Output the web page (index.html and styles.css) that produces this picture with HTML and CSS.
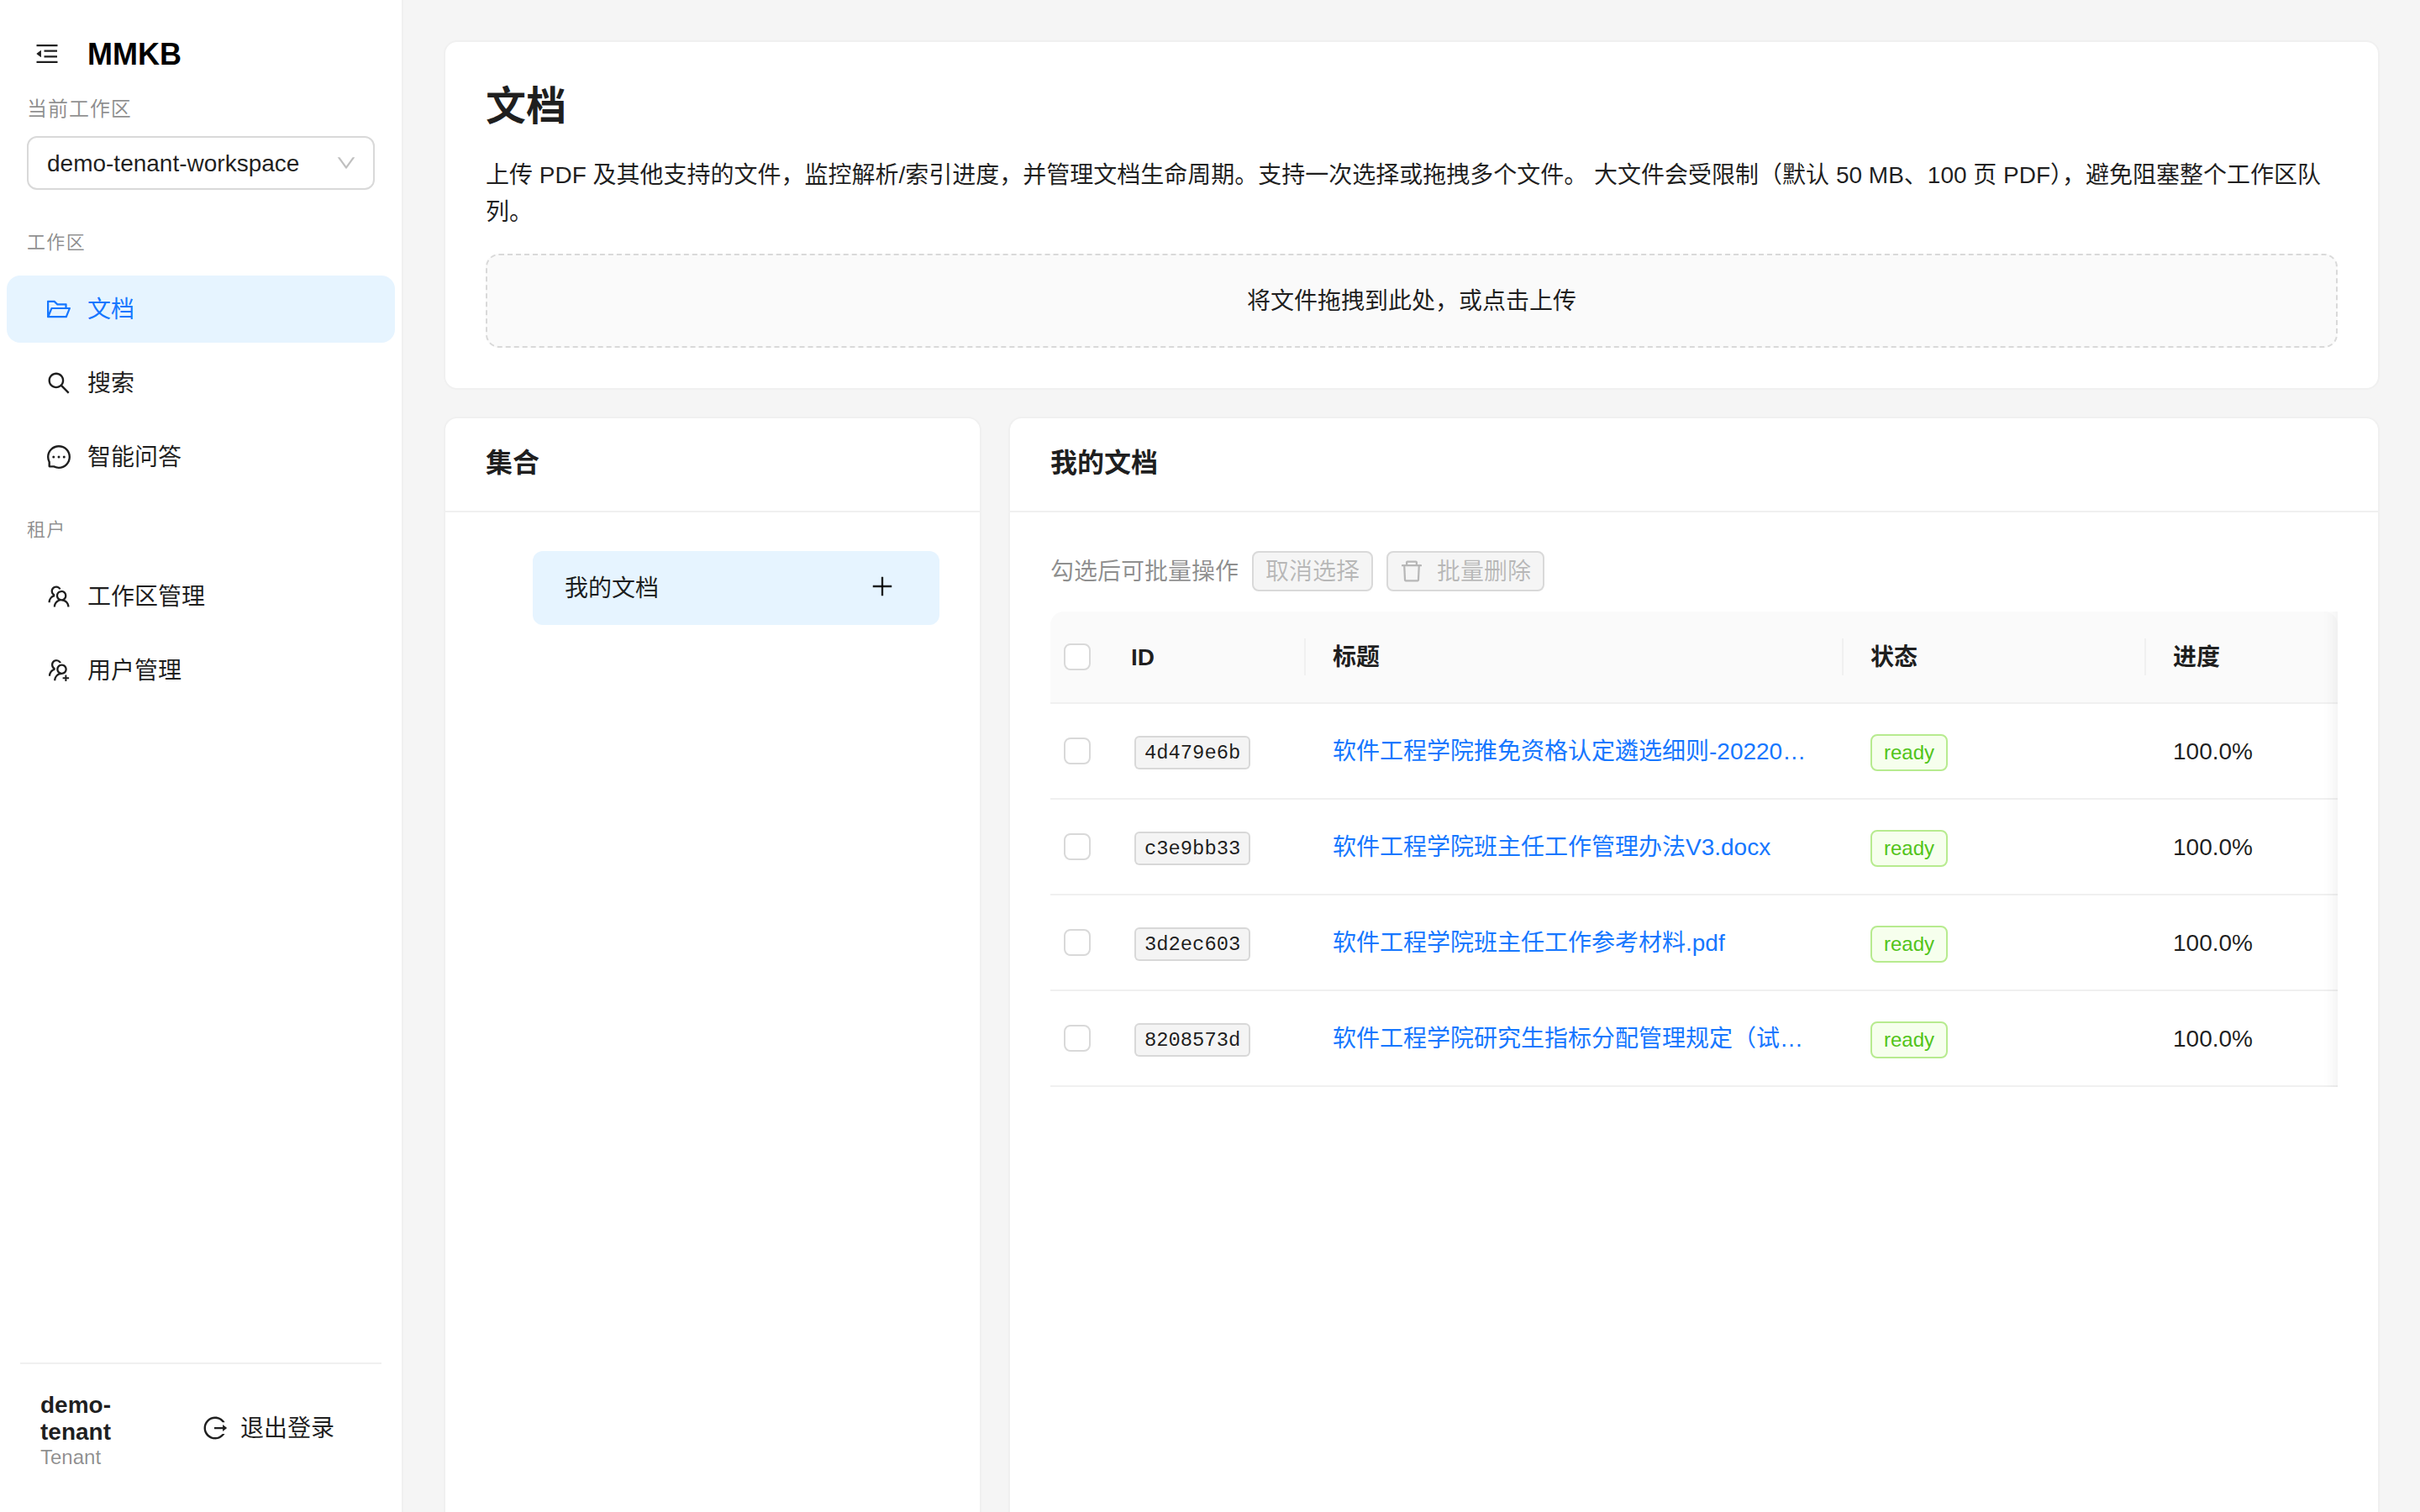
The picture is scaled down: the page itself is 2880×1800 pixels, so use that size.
FILE: index.html
```html
<!DOCTYPE html>
<html lang="zh-CN">
<head>
    <meta charset="UTF-8">
    <meta name="viewport" content="width=device-width, initial-scale=1.0">
    <title>MMKB</title>
    <link rel="stylesheet" href="styles.css">
</head>
<body>
    <div class="layout">
        <aside class="sidebar">
            <div class="brand">
                <svg class="icon" viewBox="64 64 896 896"><path d="M408 442h480c4.400 0 8-3.600 8-8v-56c0-4.400-3.600-8-8-8H408c-4.400 0-8 3.600-8 8v56c0 4.400 3.600 8 8 8zm-8 204c0 4.400 3.600 8 8 8h480c4.400 0 8-3.600 8-8v-56c0-4.400-3.600-8-8-8H408c-4.400 0-8 3.600-8 8v56zm504-486H120c-4.400 0-8 3.600-8 8v56c0 4.400 3.600 8 8 8h784c4.400 0 8-3.600 8-8v-56c0-4.400-3.600-8-8-8zm0 632H120c-4.400 0-8 3.600-8 8v56c0 4.400 3.600 8 8 8h784c4.400 0 8-3.600 8-8v-56c0-4.400-3.600-8-8-8zM115.400 518.900L271.700 642c5.800 4.600 14.400.5 14.400-6.900V388.900c0-7.400-8.500-11.500-14.400-6.900L115.400 505.100a8.740 8.740 0 000 13.800z"/></svg>
                <span class="brand-name">MMKB</span>
            </div>
            <div class="workspace">
                <div class="workspace-label">当前工作区</div>
                <div class="select">
                    <span class="label">demo-tenant-workspace</span>
                    <svg class="select-arrow" viewBox="64 64 896 896"><path d="M884 256h-75c-5.100 0-9.900 2.500-12.900 6.600L512 654.200 227.900 262.600c-3-4.100-7.800-6.600-12.900-6.600h-75c-6.500 0-10.300 7.400-6.500 12.700l352.600 486.100c12.800 17.600 39 17.600 51.700 0l352.600-486.100c3.900-5.300.1-12.700-6.400-12.700z"/></svg>
                </div>
            </div>
            <nav class="menu">
                <div class="menu-title">工作区</div>
                <a class="menu-item active">
                    <svg class="icon" viewBox="64 64 896 896"><path d="M928 444H820V330.400c0-17.700-14.300-32-32-32H473L355.700 186.200a8.150 8.150 0 00-5.500-2.200H96c-17.700 0-32 14.300-32 32v592c0 17.700 14.300 32 32 32h698c13 0 24.800-7.900 29.700-20l134-332c1.500-3.800 2.300-7.900 2.300-12 0-17.700-14.300-32-32-32zM136 256h188.500l119.600 114.400H748V444H238c-13 0-24.800 7.900-29.700 20L136 643.200V256zm635.300 512H159l103.300-256h612.400L771.300 768z"/></svg>
                    <span class="label">文档</span>
                </a>
                <a class="menu-item">
                    <svg class="icon" viewBox="64 64 896 896"><path d="M909.600 854.500L649.900 594.800C690.200 542.700 712 479 712 412c0-80.200-31.300-155.400-87.900-212.100-56.600-56.700-132-87.900-212.100-87.900s-155.500 31.300-212.100 87.900C143.200 256.500 112 331.800 112 412c0 80.100 31.300 155.500 87.900 212.100C256.500 680.800 331.800 712 412 712c67 0 130.600-21.800 182.700-62l259.700 259.600a8.200 8.200 0 0011.600 0l43.600-43.500a8.200 8.200 0 000-11.600zM570.400 570.400C528 612.700 471.800 636 412 636s-116-23.300-158.400-65.600C211.300 528 188 471.800 188 412s23.300-116.100 65.600-158.400C296 211.300 352.200 188 412 188s116.100 23.200 158.400 65.600S636 352.200 636 412s-23.300 116.100-65.600 158.400z"/></svg>
                    <span class="label">搜索</span>
                </a>
                <a class="menu-item">
                    <svg class="icon" viewBox="64 64 896 896"><path d="M464 512a48 48 0 1096 0 48 48 0 10-96 0zm200 0a48 48 0 1096 0 48 48 0 10-96 0zm-400 0a48 48 0 1096 0 48 48 0 10-96 0zm661.200-173.600c-22.600-53.700-55-101.900-96.300-143.300a444.350 444.350 0 00-143.300-96.300C630.600 75.700 572.200 64 512 64h-2c-60.600.3-119.300 12.300-174.500 35.900a445.350 445.350 0 00-142 96.500c-40.900 41.300-73 89.300-95.200 142.800-23 55.400-34.600 114.300-34.300 174.900A449.400 449.400 0 00112 714v152a46 46 0 0046 46h152.100A449.400 449.400 0 00510 960h2.100c59.900 0 118-11.600 172.700-34.300a444.480 444.480 0 00142.800-95.200c41.300-40.900 73.800-88.700 96.500-142 23.600-55.200 35.600-113.900 35.900-174.500.3-60.900-11.500-120-34.800-175.600zm-151.100 438C704 845.800 611 884 512 884h-1.700c-60.300-.3-120.200-15.300-173.100-43.500l-8.400-4.500H188V695.200l-4.500-8.400C155.300 633.900 140.300 574 140 513.700c-.4-99.700 37.700-193.300 107.600-263.800 69.800-70.500 163.100-109.500 262.800-109.900h1.700c50 0 98.500 9.700 144.200 28.900 44.600 18.700 84.600 45.600 119 80 34.300 34.300 61.300 74.400 80 119 19.400 46.200 29.100 95.200 28.900 145.800-.6 99.600-39.700 192.900-110.100 262.700z"/></svg>
                    <span class="label">智能问答</span>
                </a>
                <div class="menu-title">租户</div>
                <a class="menu-item">
                    <svg class="icon" viewBox="64 64 896 896"><path d="M824.200 699.900a301.550 301.550 0 00-86.400-60.400C783.100 602.800 812 546.800 812 484c0-110.800-92.400-201.700-203.200-200-109.100 1.700-197 90.600-197 200 0 62.800 29 118.800 74.200 155.500a300.950 300.950 0 00-86.400 60.400C345 754.600 314 826.800 312 903.800a8 8 0 008 8.200h56c4.300 0 7.900-3.400 8-7.700 1.900-58 25.400-112.300 66.700-153.500A226.620 226.620 0 01612 684c60.900 0 118.200 23.700 161.300 66.800C814.600 792 838 846.300 840 904.300c.1 4.300 3.700 7.700 8 7.700h56a8 8 0 008-8.200c-2-77-33-149.200-87.800-203.900zM612 612c-34.200 0-66.400-13.300-90.500-37.500a126.860 126.860 0 01-37.500-91.800c.3-32.800 13.400-64.500 36.300-88 24-24.600 56.100-38.300 90.400-38.700 33.900-.3 66.800 12.900 91 36.600 24.800 24.300 38.400 56.800 38.400 91.400 0 34.200-13.300 66.300-37.500 90.500A127.300 127.300 0 01612 612zM361.500 510.400c-.9-8.700-1.400-17.500-1.400-26.400 0-15.900 1.500-31.400 4.300-46.500.7-3.600-1.200-7.300-4.500-8.800-13.600-6.100-26.100-14.500-36.900-25.100a127.540 127.540 0 01-38.700-95.400c.9-32.100 13.800-62.600 36.300-85.600 24.700-25.300 57.900-39.100 93.200-38.700 31.900.3 62.700 12.600 86 34.400 7.900 7.400 14.700 15.600 20.400 24.400 2 3.100 5.900 4.400 9.300 3.200 17.600-6.100 36.200-10.400 55.300-12.400 5.600-.6 8.800-6.600 6.300-11.600-32.500-64.300-98.900-108.700-175.700-109.900-110.900-1.700-203.300 89.200-203.300 199.900 0 62.800 28.900 118.800 74.200 155.500-31.800 14.700-61.100 35-86.500 60.400-54.800 54.700-85.800 126.900-87.800 204a8 8 0 008 8.200h56.100c4.300 0 7.900-3.400 8-7.700 1.900-58 25.400-112.300 66.700-153.500 29.400-29.400 65.400-49.800 104.700-59.700 3.900-1 6.500-4.700 6-8.700z"/></svg>
                    <span class="label">工作区管理</span>
                </a>
                <a class="menu-item">
                    <svg class="icon" viewBox="64 64 896 896"><path d="M892 772h-80v-80c0-4.400-3.600-8-8-8h-48c-4.400 0-8 3.600-8 8v80h-80c-4.400 0-8 3.600-8 8v48c0 4.400 3.600 8 8 8h80v80c0 4.400 3.600 8 8 8h48c4.400 0 8-3.600 8-8v-80h80c4.400 0 8-3.600 8-8v-48c0-4.400-3.600-8-8-8zM373.500 498.400c-.9-8.700-1.400-17.500-1.400-26.400 0-15.900 1.500-31.400 4.300-46.500.7-3.600-1.200-7.300-4.500-8.800-13.600-6.100-26.100-14.500-36.900-25.100a127.540 127.540 0 01-38.700-95.400c.9-32.100 13.800-62.600 36.300-85.600 24.700-25.300 57.900-39.100 93.200-38.700 31.900.3 62.700 12.600 86 34.400 7.900 7.400 14.700 15.600 20.400 24.400 2 3.100 5.900 4.400 9.300 3.200 17.600-6.100 36.200-10.400 55.300-12.400 5.600-.6 8.800-6.600 6.300-11.600-32.500-64.300-98.900-108.700-175.700-109.900-110.800-1.700-203.200 89.200-203.200 200 0 62.800 28.900 118.800 74.200 155.500-31.800 14.700-61.100 35-86.500 60.400-54.800 54.700-85.800 126.900-87.800 204a8 8 0 008 8.200h56.100c4.300 0 7.900-3.400 8-7.700 1.900-58 25.400-112.300 66.700-153.500 29.400-29.400 65.400-49.800 104.700-59.700 3.800-1.100 6.400-4.800 5.900-8.800zM824 472c0-109.400-87.900-198.300-196.900-200C516.300 270.300 424 361.200 424 472c0 62.800 29 118.800 74.200 155.500a300.950 300.950 0 00-86.400 60.400C357 742.600 326 814.800 324 891.800a8 8 0 008 8.200h56c4.300 0 7.900-3.400 8-7.700 1.900-58 25.400-112.300 66.700-153.500C505.800 695.700 563 672 624 672c110.400 0 200-89.500 200-200zm-109.500 90.500C690.300 586.700 658.200 600 624 600s-66.300-13.300-90.500-37.500a127.260 127.260 0 01-37.500-91.800c.3-32.800 13.400-64.500 36.300-88 24-24.600 56.100-38.300 90.400-38.700 33.900-.3 66.800 12.900 91 36.600 24.800 24.300 38.400 56.800 38.400 91.400-.1 34.200-13.400 66.300-37.600 90.500z"/></svg>
                    <span class="label">用户管理</span>
                </a>
            </nav>
            <div class="account">
                <div class="account-info">
                    <div class="account-name">demo-tenant</div>
                    <div class="account-role">Tenant</div>
                </div>
                <a class="logout">
                    <svg class="icon" viewBox="64 64 896 896"><path d="M868 732h-70.300c-4.800 0-9.300 2.100-12.300 5.800-7 8.500-14.500 16.700-22.400 24.500a353.840 353.840 0 01-112.700 75.900A352.800 352.800 0 01512.400 866c-47.900 0-94.300-9.400-137.900-27.800a353.840 353.840 0 01-112.700-75.900 353.280 353.280 0 01-76-112.500C167.300 606.200 158 559.900 158 512s9.400-94.200 27.800-137.800c17.800-42.100 43.400-80 76-112.500s70.500-58.100 112.700-75.900c43.600-18.400 90-27.800 137.900-27.800 47.900 0 94.300 9.300 137.900 27.800 42.200 17.800 80.100 43.400 112.700 75.900 7.900 7.900 15.300 16.100 22.400 24.500 3 3.700 7.600 5.800 12.300 5.800H868c6.300 0 10.200-7 6.700-12.300C798 160.500 663.800 81.600 511.300 82 271.700 82.600 79.600 277.100 82 516.400 84.400 751.900 276.200 942 512.400 942c152.100 0 285.700-78.800 362.300-197.700 3.400-5.300-.4-12.300-6.700-12.300zm88.900-226.300L815 393.700c-5.300-4.200-13-.4-13 6.300v76H488c-4.400 0-8 3.600-8 8v56c0 4.400 3.600 8 8 8h314v76c0 6.700 7.800 10.500 13 6.300l141.900-112a8 8 0 000-12.600z"/></svg>
                    <span class="label">退出登录</span>
                </a>
            </div>
        </aside>

        <main class="content">
            <section class="card intro">
                <h1>文档</h1>
                <p>上传 PDF 及其他支持的文件，监控解析/索引进度，并管理文档生命周期。支持一次选择或拖拽多个文件。 大文件会受限制（默认 50 MB、100 页 PDF），避免阻塞整个工作区队列。</p>
                <div class="dropzone">将文件拖拽到此处，或点击上传</div>
            </section>

            <div class="panels">
                <section class="card">
                    <header class="card-head">集合</header>
                    <div class="card-body">
                        <div class="collection">
                            <span class="label">我的文档</span>
                            <svg class="icon" viewBox="64 64 896 896"><path d="M482 152h60q8 0 8 8v704q0 8-8 8h-60q-8 0-8-8V160q0-8 8-8z"/><path d="M192 474h672q8 0 8 8v60q0 8-8 8H160q-8 0-8-8v-60q0-8 8-8z"/></svg>
                        </div>
                    </div>
                </section>

                <section class="card">
                    <header class="card-head">我的文档</header>
                    <div class="card-body">
                        <div class="toolbar">
                            <span class="label hint">勾选后可批量操作</span>
                            <button class="btn" disabled><span class="label">取消选择</span></button>
                            <button class="btn" disabled>
                                <svg class="icon" viewBox="64 64 896 896"><path d="M360 184h-8c4.400 0 8-3.600 8-8v8h304v-8c0 4.400 3.600 8 8 8h-8v72h72v-80c0-35.300-28.700-64-64-64H352c-35.300 0-64 28.700-64 64v80h72v-72zm504 72H160c-17.700 0-32 14.300-32 32v32c0 4.400 3.600 8 8 8h60.400l24.700 523c1.600 34.100 29.800 61 63.900 61h454c34.200 0 62.300-26.800 63.900-61l24.700-523H888c4.400 0 8-3.600 8-8v-32c0-17.700-14.300-32-32-32zM731.300 840H292.700l-24.200-512h487l-24.200 512z"/></svg>
                                <span class="label">批量删除</span>
                            </button>
                        </div>
                        <div class="table-wrap">
                            <table>
                                <colgroup>
                                    <col class="col-check">
                                    <col class="col-id">
                                    <col class="col-title">
                                    <col class="col-status">
                                    <col class="col-progress">
                                </colgroup>
                                <thead>
                                    <tr>
                                        <th class="check"><span class="checkbox"></span></th>
                                        <th class="split">ID</th>
                                        <th class="split">标题</th>
                                        <th class="split">状态</th>
                                        <th>进度</th>
                                    </tr>
                                </thead>
                                <tbody>
                                    <tr>
                                        <td class="check"><span class="checkbox"></span></td>
                                        <td><code>4d479e6b</code></td>
                                        <td><a class="doc-link">软件工程学院推免资格认定遴选细则-20220…</a></td>
                                        <td><span class="tag">ready</span></td>
                                        <td>100.0%</td>
                                    </tr>
                                    <tr>
                                        <td class="check"><span class="checkbox"></span></td>
                                        <td><code>c3e9bb33</code></td>
                                        <td><a class="doc-link">软件工程学院班主任工作管理办法V3.docx</a></td>
                                        <td><span class="tag">ready</span></td>
                                        <td>100.0%</td>
                                    </tr>
                                    <tr>
                                        <td class="check"><span class="checkbox"></span></td>
                                        <td><code>3d2ec603</code></td>
                                        <td><a class="doc-link">软件工程学院班主任工作参考材料.pdf</a></td>
                                        <td><span class="tag">ready</span></td>
                                        <td>100.0%</td>
                                    </tr>
                                    <tr>
                                        <td class="check"><span class="checkbox"></span></td>
                                        <td><code>8208573d</code></td>
                                        <td><a class="doc-link">软件工程学院研究生指标分配管理规定（试…</a></td>
                                        <td><span class="tag">ready</span></td>
                                        <td>100.0%</td>
                                    </tr>
                                </tbody>
                            </table>
                        </div>
                    </div>
                </section>
            </div>
        </main>
    </div>
</body>
</html>
```
FILE: styles.css
```css
* {
    margin: 0;
    padding: 0;
    box-sizing: border-box;
}

body {
    font-family: "Liberation Sans", "Noto Sans CJK SC", sans-serif;
    font-size: 28px;
    line-height: 44px;
    color: rgba(0, 0, 0, 0.88);
    background-color: #f5f5f5;
    overflow: hidden;
}

.icon {
    width: 28px;
    height: 28px;
    fill: currentColor;
    flex-shrink: 0;
}

.label {
    padding-top: 2px;
}

.layout {
    display: flex;
    height: 1800px;
    overflow: hidden;
}

/* Sidebar */
.sidebar {
    display: flex;
    flex-direction: column;
    width: 480px;
    background-color: #fff;
    border-right: 2px solid #f0f0f0;
}

.brand {
    display: flex;
    align-items: center;
    gap: 34px;
    height: 64px;
    margin-top: 32px;
    padding-left: 42px;
}

.brand-name {
    font-size: 36px;
    font-weight: 700;
    color: #000;
    padding-top: 1px;
}

.workspace {
    padding: 15px 32px 0;
}

.workspace-label {
    font-size: 24px;
    line-height: 38px;
    letter-spacing: 0.96px;
    color: rgba(0, 0, 0, 0.45);
    margin-bottom: 13px;
}

.select {
    display: flex;
    align-items: center;
    justify-content: space-between;
    height: 64px;
    padding: 0 20px 0 22px;
    border: 2px solid #d9d9d9;
    border-radius: 12px;
}

.select-arrow {
    width: 24px;
    height: 24px;
    fill: rgba(0, 0, 0, 0.25);
}

.menu {
    flex: 1;
    padding: 34px 8px 0;
}

.menu-title {
    height: 68px;
    padding: 12px 24px 0;
    font-size: 22px;
    line-height: 34px;
    letter-spacing: 1.32px;
    color: rgba(0, 0, 0, 0.45);
}

.menu-item {
    display: flex;
    align-items: center;
    gap: 20px;
    height: 80px;
    margin-bottom: 8px;
    padding-left: 48px;
    border-radius: 16px;
}

.menu-item + .menu-title {
    margin-top: 18px;
}

.menu-item.active {
    background-color: #e6f4ff;
    color: #1677ff;
}

.account {
    display: flex;
    align-items: center;
    justify-content: space-between;
    height: 178px;
    margin: 0 24px;
    padding: 0 56px 24px 24px;
    border-top: 2px solid #f0f0f0;
}

.account-info {
    width: 110px;
    padding-top: 6px;
}

.account-name {
    font-weight: 700;
    line-height: 32px;
}

.account-role {
    font-size: 24px;
    line-height: 28px;
    color: rgba(0, 0, 0, 0.45);
}

.logout {
    display: flex;
    align-items: center;
    gap: 16px;
}

/* Main area */
.content {
    flex: 1;
    display: flex;
    flex-direction: column;
    gap: 32px;
    padding: 48px 48px 0;
}

.card {
    background-color: #fff;
    border: 2px solid #f0f0f0;
    border-radius: 16px;
}

.intro {
    padding: 48px;
}

.intro h1 {
    font-size: 48px;
    line-height: 58px;
    margin-bottom: 31px;
}

.intro p {
    margin-bottom: 27px;
}

.dropzone {
    height: 112px;
    line-height: 110px;
    text-align: center;
    background-color: #fafafa;
    border: 2px dashed #d9d9d9;
    border-radius: 16px;
}

.panels {
    display: grid;
    grid-template-columns: 640px 1632px;
    gap: 32px;
    height: 1400px;
    flex-shrink: 0;
}

.card-head {
    height: 112px;
    padding: 0 48px;
    font-size: 32px;
    font-weight: 700;
    line-height: 106px;
    border-bottom: 2px solid #f0f0f0;
}

.card-body {
    padding: 46px 48px 48px;
}

.collection {
    display: flex;
    align-items: center;
    justify-content: space-between;
    height: 88px;
    margin-left: 56px;
    padding: 0 54px 0 38px;
    background-color: #e6f4ff;
    border-radius: 12px;
}

.collection .icon {
    margin-bottom: 4px;
}

.toolbar {
    display: flex;
    align-items: center;
    gap: 16px;
    height: 48px;
    margin-bottom: 24px;
}

.hint {
    color: rgba(0, 0, 0, 0.45);
}

.btn {
    display: flex;
    align-items: center;
    gap: 16px;
    height: 48px;
    padding: 0 14px;
    font: inherit;
    color: rgba(0, 0, 0, 0.25);
    background-color: #f5f5f5;
    border: 2px solid #d9d9d9;
    border-radius: 8px;
}

/* Documents table */
.table-wrap {
    position: relative;
    overflow: hidden;
    border-top-left-radius: 16px;
}

.table-wrap::after {
    content: "";
    position: absolute;
    top: 0;
    right: 0;
    bottom: 0;
    width: 60px;
    box-shadow: inset -20px 0 16px -16px rgba(5, 5, 5, 0.06);
}

table {
    table-layout: fixed;
    width: 1532px;
    border-collapse: separate;
    border-spacing: 0;
}

.col-check {
    width: 64px;
}

.col-id {
    width: 240px;
}

.col-title {
    width: 640px;
}

.col-status {
    width: 360px;
}

th,
td {
    padding: 2px 32px 0;
    text-align: left;
    vertical-align: middle;
    white-space: nowrap;
    border-bottom: 2px solid #f0f0f0;
}

th {
    height: 110px;
    background-color: #fafafa;
}

th:last-child {
    border-top-right-radius: 16px;
}

td {
    height: 114px;
}

.split {
    background-image: linear-gradient(#f0f0f0, #f0f0f0);
    background-repeat: no-repeat;
    background-position: right center;
    background-size: 2px 44px;
}

.check {
    padding: 0 16px;
}

.checkbox {
    display: block;
    width: 32px;
    height: 32px;
    background-color: #fff;
    border: 2px solid #d9d9d9;
    border-radius: 8px;
}

code {
    display: block;
    width: 138px;
    height: 40px;
    margin: 2px 0 0 4px;
    padding: 5px 10px 0;
    font-family: "Liberation Mono", monospace;
    font-size: 23.8px;
    line-height: 28px;
    background-color: rgba(150, 150, 150, 0.1);
    border: 2px solid rgba(100, 100, 100, 0.2);
    border-radius: 6px;
}

.doc-link {
    color: #1677ff;
}

.tag {
    display: block;
    width: fit-content;
    height: 44px;
    margin-top: 2px;
    padding: 0 14px;
    font-size: 24px;
    line-height: 40px;
    color: #52c41a;
    background-color: #f6ffed;
    border: 2px solid #b7eb8f;
    border-radius: 8px;
}
```
